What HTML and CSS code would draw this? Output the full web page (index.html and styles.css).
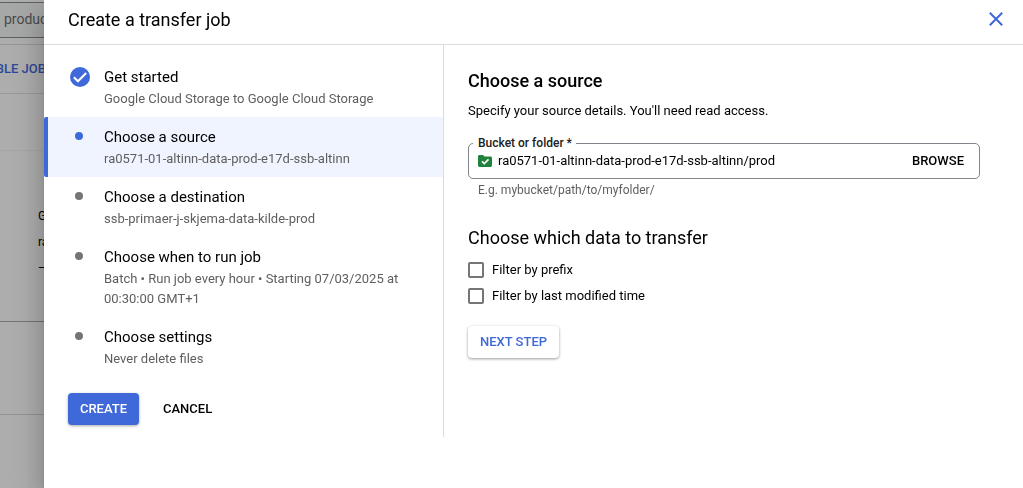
FILE: index.html
```html
<!DOCTYPE html>
<html lang="en">
<head>
<meta charset="utf-8">
<title>Create a transfer job</title>
<link rel="stylesheet" href="styles.css">
</head>
<body>
<div class="page">
  <div class="page-search"><span>production</span></div>
  <div class="page-toolbar"><span>DISABLE JOB</span></div>
  <div class="page-strip"></div>
  <div class="page-details">
    <span>Google</span>
    <span>ra0571</span>
    <span>—</span>
  </div>
  <div class="page-row"></div>
</div>
<div class="drawer">
  <header class="drawer-header">
    <h1 class="drawer-title">Create a transfer job</h1>
    <button class="close" aria-label="Close">
      <svg width="14" height="14" viewBox="0 0 14 14"><path d="M.8.8 13.2 13.2M13.2.8.8 13.2" stroke="#3f68d9" stroke-width="2" fill="none"/></svg>
    </button>
  </header>
  <div class="drawer-body">
    <nav class="stepper">
      <div class="step">
        <span class="marker"><svg width="20" height="20" viewBox="0 0 20 20"><circle cx="10" cy="10" r="10" fill="#3f68d9"/><path d="m3.9 10.300 4 4L16.200 6" stroke="#fff" stroke-width="2" fill="none"/></svg></span>
        <div class="step-text"><div class="step-title">Get started</div><div class="step-sub">Google Cloud Storage to Google Cloud Storage</div></div>
      </div>
      <div class="step active">
        <span class="marker"><i class="dot"></i></span>
        <div class="step-text"><div class="step-title">Choose a source</div><div class="step-sub">ra0571-01-altinn-data-prod-e17d-ssb-altinn</div></div>
      </div>
      <div class="step">
        <span class="marker"><i class="dot"></i></span>
        <div class="step-text"><div class="step-title">Choose a destination</div><div class="step-sub">ssb-primaer-j-skjema-data-kilde-prod</div></div>
      </div>
      <div class="step">
        <span class="marker"><i class="dot"></i></span>
        <div class="step-text"><div class="step-title">Choose when to run job</div><div class="step-sub">Batch • Run job every hour • Starting 07/03/2025 at<br>00:30:00 GMT+1</div></div>
      </div>
      <div class="step">
        <span class="marker"><i class="dot"></i></span>
        <div class="step-text"><div class="step-title">Choose settings</div><div class="step-sub">Never delete files</div></div>
      </div>
      <div class="actions">
        <button class="btn primary">CREATE</button>
        <button class="btn flat">CANCEL</button>
      </div>
    </nav>
    <main class="panel">
      <h2 class="panel-title">Choose a source</h2>
      <p class="intro">Specify your source details. You'll need read access.</p>
      <div class="field">
        <span class="field-label">Bucket or folder *</span>
        <svg class="folder" width="14" height="12" viewBox="0 0 14 12"><path d="M1.4 0H5l1.500 1.500h6.100A1.400 1.400 0 0 1 14 2.900v7.700a1.400 1.400 0 0 1-1.400 1.400H1.400A1.400 1.400 0 0 1 0 10.600V1.400A1.400 1.400 0 0 1 1.400 0z" fill="#21823d"/><path d="m4 6.300 2.300 2.200 4.200-4.200" stroke="#fff" stroke-width="1.700" fill="none"/></svg>
        <span class="field-value">ra0571-01-altinn-data-prod-e17d-ssb-altinn/prod</span>
        <button class="browse">BROWSE</button>
      </div>
      <div class="hint">E.g. mybucket/path/to/myfolder/</div>
      <h3 class="section-title">Choose which data to transfer</h3>
      <label class="check"><span class="box"></span>Filter by prefix</label>
      <label class="check"><span class="box"></span>Filter by last modified time</label>
      <button class="btn raised">NEXT STEP</button>
    </main>
  </div>
</div>
</body>
</html>
```
FILE: styles.css
```css
* { box-sizing: border-box; }
body {
  margin: 0;
  height: 488px;
  overflow: hidden;
  font-family: Roboto, sans-serif;
  font-size: 13px;
  line-height: 20px;
  color: #000;
  background: #adadad;
}
h1, h2, h3, p { margin: 0; }
button {
  padding: 0;
  border: 0;
  background: none;
  font: 500 13px/20px Roboto, sans-serif;
  color: #000;
}

/* Dimmed page behind the drawer */
.page { width: 44px; height: 488px; padding-top: 2px; overflow: hidden; white-space: nowrap; }
.page-search {
  height: 36px;
  padding: 6px 0 0 4px;
  border-top: 1px solid #606060;
  border-bottom: 1px solid #606060;
  background: #a6a8a8;
  font-size: 14px;
  color: #4a4a4a;
}
.page-toolbar {
  display: flex;
  align-items: center;
  justify-content: flex-end;
  height: 50px;
  margin-top: 6px;
  border-top: 1px solid #959595;
  border-bottom: 1px solid #999;
  font-weight: 500;
  color: #2c4898;
}
.page-toolbar span { margin-right: -2px; }
.page-strip { height: 57px; border-bottom: 1px solid #a5a5a5; }
.page-details {
  display: flex;
  flex-direction: column;
  gap: 6px;
  height: 171px;
  padding: 55px 0 0 38px;
  border-bottom: 1px solid #747474;
  font-size: 12px;
}
.page-row { height: 93px; border-bottom: 1px solid #929292; }

.drawer {
  position: fixed;
  inset: 0 0 0 44px;
  background: #fff;
  box-shadow: 0 8px 10px -5px rgba(0,0,0,.2), 0 16px 24px 2px rgba(0,0,0,.14), 0 6px 30px 5px rgba(0,0,0,.12);
}
.drawer-header {
  display: flex;
  align-items: center;
  justify-content: space-between;
  height: 45px;
  padding: 0 20px 4px 24px;
  border-bottom: 1px solid #dcdcdc;
}
.drawer-title { font-size: 18px; line-height: 24px; font-weight: 400; }
.close { display: flex; margin-bottom: 2px; }
.drawer-body { display: flex; height: 392px; }

.stepper { width: 400px; padding-top: 12px; border-right: 1px solid #dcdcdc; }
.step { display: flex; padding: 10px 0 8px 22px; border-left: 4px solid transparent; }
.step.active { background: linear-gradient(#f0f4ff, #f0f4ff) padding-box; border-left-color: #3f68d9; border-radius: 2px 0 0 2px; }
.marker { display: flex; width: 34px; height: 20px; flex: none; }
.dot { width: 8px; height: 8px; margin: 5px 0 0 5px; border-radius: 50%; background: #757575; }
.active .dot { background: #3f68d9; }
.step-title { font-size: 15px; margin-bottom: 2px; }
.step-sub { color: #5f5f5f; white-space: nowrap; }

.actions { display: flex; gap: 24px; padding: 16px 0 0 24px; }
.btn { height: 32px; border-radius: 4px; }
.primary { width: 71px; background: #3f68d9; color: #fff; box-shadow: 0 1px 3px rgba(0,0,0,.35); }

.panel { display: flex; flex-direction: column; align-items: flex-start; padding: 24px 0 0 24px; }
.panel-title { font-size: 18px; line-height: 24px; font-weight: 500; }
.intro { margin-top: 8px; }
.field {
  position: relative;
  display: flex;
  align-items: center;
  width: 512px;
  height: 36px;
  margin-top: 22px;
  padding: 0 15px 0 9px;
  border: 1px solid #80868b;
  border-radius: 5px;
}
.field-label {
  position: absolute;
  left: 4px;
  top: -9px;
  padding: 0 4px 0 5px;
  background: #fff;
  font-size: 12px;
  line-height: 16px;
  font-weight: 500;
  color: #212121;
}
.field-value { margin: 0 auto 0 6px; letter-spacing: -.01px; }
.hint { margin: 1px 0 0 10px; font-size: 12px; color: #5f5f5f; }
.section-title { margin: 26px 0 10px; font-size: 18px; line-height: 24px; font-weight: 400; }
.check { display: flex; align-items: center; gap: 8px; height: 20px; margin-bottom: 6px; }
.box { width: 16px; height: 16px; border: 2px solid #757575; border-radius: 2px; }
.raised { width: 91px; margin-top: 14px; color: #3f68d9; box-shadow: 0 1px 3px rgba(0,0,0,.4); }
```
